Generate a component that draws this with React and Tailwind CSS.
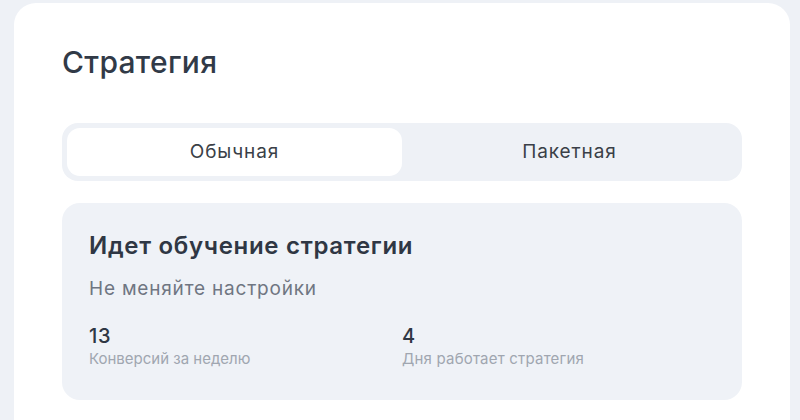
export default function App() {
  return (
    <div
      className="min-h-[420px] h-[420px] overflow-hidden bg-[#eef1f6] pt-[3px] pl-[14px]"
      style={{ fontFamily: 'Inter, "Noto Sans", sans-serif' }}
    >
      <div className="w-[776px] h-[460px] rounded-[22px] bg-white pl-[48px] pt-[40px]">
        <h1 className="text-[30px] leading-[38px] tracking-[0.3px] font-medium text-[#313a47]">Стратегия</h1>

        {/* tabs */}
        <div className="mt-[42px] w-[680px] h-[58px] rounded-[16px] bg-[#eef1f6] p-[5px] flex">
          <div className="w-[335px] h-full rounded-[13px] bg-white flex items-center justify-center text-[19px] tracking-[0.9px] text-[#3a3f47]">
            Обычная
          </div>
          <div className="flex-1 flex items-center justify-center text-[19px] tracking-[0.9px] text-[#3a3f47]">
            Пакетная
          </div>
        </div>

        {/* learning status */}
        <div className="mt-[22px] w-[680px] h-[197px] rounded-[18px] bg-[#eff2f7] pl-[27px] pt-[28px]">
          <div className="text-[24px] leading-[30px] tracking-[0.7px] font-semibold text-[#2f3744]">Идет обучение стратегии</div>
          <div className="mt-[16px] text-[19px] leading-[24px] tracking-[0.8px] text-[#6f7682]">Не меняйте настройки</div>
          <div className="mt-[23px] grid grid-cols-2 w-[626px]">
            <div>
              <div className="text-[20px] leading-[24px] tracking-[0.8px] font-medium text-[#2f3744]">13</div>
              <div className="mt-[2px] text-[15px] leading-[18px] text-[#a0a6b0]">Конверсий за неделю</div>
            </div>
            <div>
              <div className="text-[20px] leading-[24px] tracking-[0.8px] font-medium text-[#2f3744]">4</div>
              <div className="mt-[2px] text-[15px] leading-[18px] tracking-[0.2px] text-[#a0a6b0]">Дня работает стратегия</div>
            </div>
          </div>
        </div>
      </div>
    </div>
  );
}
